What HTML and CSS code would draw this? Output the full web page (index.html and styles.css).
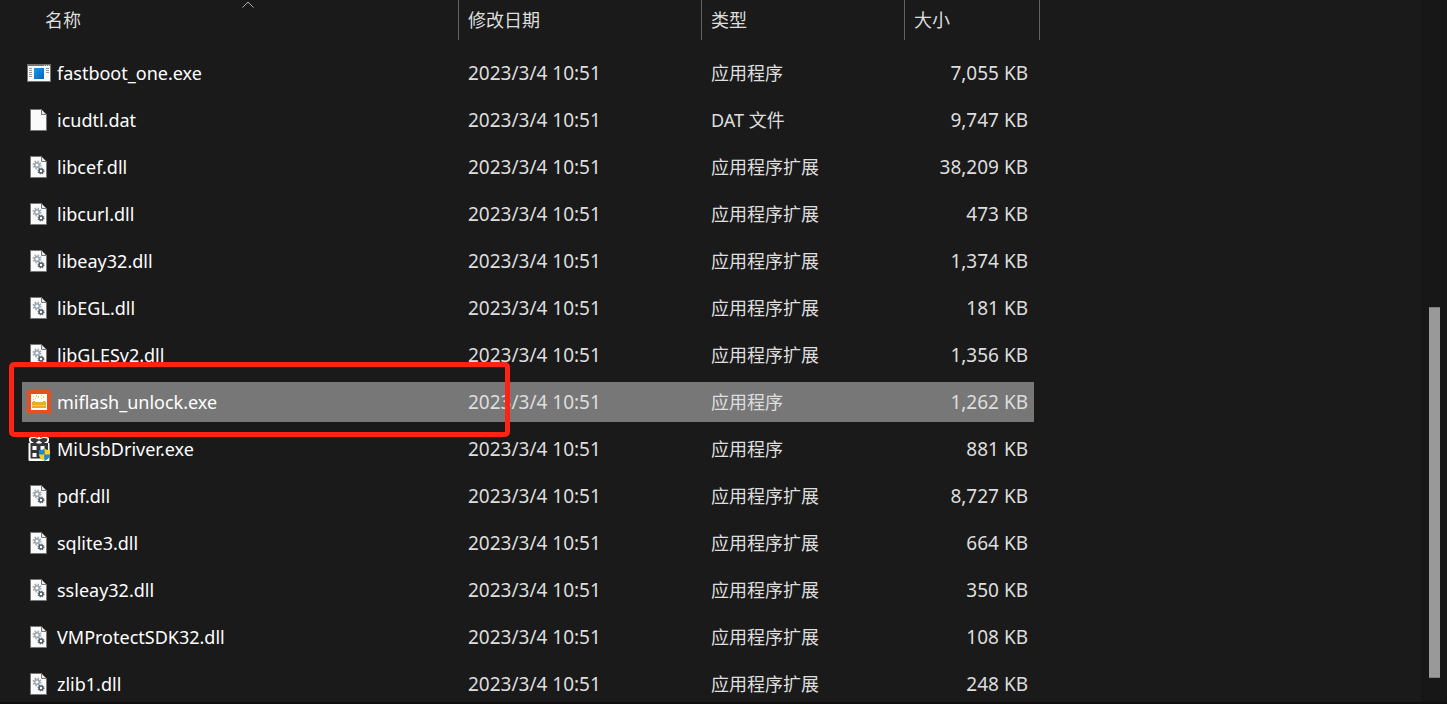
FILE: index.html
```
<!DOCTYPE html>
<html lang="zh-CN">
<head>
<meta charset="utf-8">
<title>文件列表</title>
<link rel="stylesheet" href="styles.css">
</head>
<body>
<svg class="symbols" aria-hidden="true">
  <defs>
    <linearGradient id="blue" x1="0" y1="0" x2="1" y2="1"><stop offset="0" stop-color="#1d9be6"/><stop offset="1" stop-color="#0364ba"/></linearGradient>
    <symbol id="app" viewBox="0 0 24 24">
      <path fill="#737373" d="M0 3h24v18H0z"/><path fill="#fafafa" d="M1 5h22v15H1z"/>
      <path fill="#d0d0d0" d="M17 4h1v1h-1zM19 4h1v1h-1zM21 4h1v1h-1z"/>
      <path fill="url(#blue)" d="M7 7h10v11H7z"/>
      <path stroke="#969696" d="M2 7.500h3M2 9.500h3M2 11.500h3M2 13.500h3M2 15.500h3M19 7.500h3M19 9.500h3M19 11.500h3"/>
    </symbol>
    <symbol id="page" viewBox="0 0 24 24">
      <path fill="#fafafa" stroke="#777" d="M3.500 1.500h11l5 5v16h-16z"/>
      <path fill="#1a1a1a" d="M15 0h6v6z"/><path fill="#e8e8e8" stroke="#777" d="M14.500 1.500v5h5z"/>
    </symbol>
    <symbol id="dll" viewBox="0 0 24 24">
      <use href="#page"/>
      <circle cx="10" cy="10" r="3.500" fill="none" stroke="#a3adb6" stroke-width="2" stroke-dasharray="1.500 1.250"/>
      <circle cx="10" cy="10" r="2.300" fill="none" stroke="#98a3ad" stroke-width="1.500"/>
      <circle cx="14" cy="16" r="2.700" fill="none" stroke="#5d666d" stroke-width="1.600" stroke-dasharray="1.200 .92"/>
      <circle cx="14" cy="16" r="1.900" fill="none" stroke="#535c62" stroke-width="1.400"/>
    </symbol>
    <symbol id="unlock" viewBox="0 0 24 24">
      <path fill="#e6501e" d="M0 0h24v24H0z"/><path fill="#fff" d="M4 4h16v16H4z"/>
      <path fill="#e9ab28" d="M5 12h1v-1h2v1h8v-1h2v1h1v6H5z"/>
      <path fill="#efc368" d="M6 6h1v1H6zM9 5h1v2H9zM11 6h1v2h-1zM8 8h1v1H8zM14 5h1v1h-1zM16 6h1v2h-1zM14 8h1v1h-1zM6 9h1v1H6z"/>
      <path stroke="#f3c65d" d="M5 15.500h14"/>
    </symbol>
    <symbol id="usb" viewBox="0 0 24 24">
      <path fill="#fff" d="M2 1l2-1h4l4 1 4-1h4l2 1v3l-1 2h1.500v17q0 1-1 1h-19q-1 0-1-1V6H3L2 4z"/>
      <path fill="#333436" d="M3.500 1.500 8 1l4 1.500L16 1l4.500.500L20 4l-3 2h4v15.500H3.500V6H7L4 4z"/>
      <path fill="#fff" d="M11 0h2v1.500h-2zM9 5.500l3-2 3 2-1 1h-4zM5.500 9h4v4h-4zM13.500 9h4v4h-4zM5.500 16h4v4h-4z"/>
      <path fill="#168bd2" d="M17.500 11.500V18h-5.500v-5q3 .5 5.500-1.500z"/><path fill="#ffcf24" d="M17.500 11.500q2.500 2 5.500 1.500v5h-5.500z"/>
      <path fill="#ffcf24" d="M12 17.500h5.500V24q-5-2-5.500-6.500z"/><path fill="#168bd2" d="M17.500 17.500H23q-.5 4.500-5.500 6.500z"/>
    </symbol>
  </defs>
</svg>
<main class="explorer">
  <div class="content">
    <table class="files">
      <colgroup><col class="col-name"><col class="col-date"><col class="col-type"><col class="col-size"><col class="col-end"></colgroup>
      <thead>
        <tr>
          <th class="head-name" scope="col" aria-sort="ascending"><button class="head" type="button">名称<svg class="sort" viewBox="0 0 12 7" aria-hidden="true"><path d="M.5 6.500 6 1l5.500 5.500"/></svg></button></th>
          <th scope="col"><button class="head" type="button">修改日期</button></th>
          <th scope="col"><button class="head" type="button">类型</button></th>
          <th scope="col" colspan="2"><button class="head" type="button">大小</button></th>
        </tr>
      </thead>
      <tbody>
        <tr><td><div class="name"><svg class="icon"><use href="#app"/></svg>fastboot_one.exe</div></td><td class="num">2023/3/4 10:51</td><td>应用程序</td><td class="size">7,055 KB</td></tr>
        <tr><td><div class="name"><svg class="icon"><use href="#page"/></svg>icudtl.dat</div></td><td class="num">2023/3/4 10:51</td><td>DAT 文件</td><td class="size">9,747 KB</td></tr>
        <tr><td><div class="name"><svg class="icon"><use href="#dll"/></svg>libcef.dll</div></td><td class="num">2023/3/4 10:51</td><td>应用程序扩展</td><td class="size">38,209 KB</td></tr>
        <tr><td><div class="name"><svg class="icon"><use href="#dll"/></svg>libcurl.dll</div></td><td class="num">2023/3/4 10:51</td><td>应用程序扩展</td><td class="size">473 KB</td></tr>
        <tr><td><div class="name"><svg class="icon"><use href="#dll"/></svg>libeay32.dll</div></td><td class="num">2023/3/4 10:51</td><td>应用程序扩展</td><td class="size">1,374 KB</td></tr>
        <tr><td><div class="name"><svg class="icon"><use href="#dll"/></svg>libEGL.dll</div></td><td class="num">2023/3/4 10:51</td><td>应用程序扩展</td><td class="size">181 KB</td></tr>
        <tr><td><div class="name"><svg class="icon"><use href="#dll"/></svg>libGLESv2.dll</div></td><td class="num">2023/3/4 10:51</td><td>应用程序扩展</td><td class="size">1,356 KB</td></tr>
        <tr class="selected"><td class="marked"><div class="name"><svg class="icon"><use href="#unlock"/></svg>miflash_unlock.exe</div><span class="marker"></span></td><td class="num">2023/3/4 10:51</td><td>应用程序</td><td class="size">1,262 KB</td></tr>
        <tr><td><div class="name"><svg class="icon"><use href="#usb"/></svg>MiUsbDriver.exe</div></td><td class="num">2023/3/4 10:51</td><td>应用程序</td><td class="size">881 KB</td></tr>
        <tr><td><div class="name"><svg class="icon"><use href="#dll"/></svg>pdf.dll</div></td><td class="num">2023/3/4 10:51</td><td>应用程序扩展</td><td class="size">8,727 KB</td></tr>
        <tr><td><div class="name"><svg class="icon"><use href="#dll"/></svg>sqlite3.dll</div></td><td class="num">2023/3/4 10:51</td><td>应用程序扩展</td><td class="size">664 KB</td></tr>
        <tr><td><div class="name"><svg class="icon"><use href="#dll"/></svg>ssleay32.dll</div></td><td class="num">2023/3/4 10:51</td><td>应用程序扩展</td><td class="size">350 KB</td></tr>
        <tr><td><div class="name"><svg class="icon"><use href="#dll"/></svg>VMProtectSDK32.dll</div></td><td class="num">2023/3/4 10:51</td><td>应用程序扩展</td><td class="size">108 KB</td></tr>
        <tr><td><div class="name"><svg class="icon"><use href="#dll"/></svg>zlib1.dll</div></td><td class="num">2023/3/4 10:51</td><td>应用程序扩展</td><td class="size">248 KB</td></tr>
      </tbody>
    </table>
  </div>
  <div class="scrollbar" aria-hidden="true"><div class="before"></div><div class="thumb"></div><div class="after"></div></div>
</main>
</body>
</html>
```
FILE: styles.css
```
* { box-sizing: border-box; }
body {
  margin: 0;
  background: #1a1a1a;
  color: #dedede;
  font: 18px/26px "Noto Sans", "Noto Sans CJK SC", sans-serif;
}
.symbols { position: absolute; width: 0; height: 0; }
.explorer {
  display: flex;
  height: 100vh;
  overflow: hidden;
  border-bottom: 2px solid #140c11;
}
.content { flex: 1; min-width: 0; overflow: hidden; padding-left: 22px; }
.files { table-layout: fixed; width: 1018px; border-collapse: separate; border-spacing: 0; }
.col-name { width: 437px; }
.col-date { width: 243px; }
.col-type { width: 203px; }
.col-size { width: 129px; }
.col-end { width: 6px; }

th { height: 50px; padding: 0; vertical-align: top; font-weight: 400; }
.head-name { padding-left: 14px; }
.head {
  position: relative;
  display: block;
  width: 100%;
  height: 40px;
  padding: 0 9px;
  border: 0;
  border-right: 1px solid #636363;
  background: none;
  color: inherit;
  font: inherit;
  text-align: left;
}
.sort {
  position: absolute;
  top: 1px;
  left: calc(50% - 5px);
  width: 12px;
  height: 7px;
  fill: none;
  stroke: #acacac;
}

td {
  height: 47px;
  padding: 0 0 0 9px;
  border: solid transparent;
  border-width: 3px 0 4px;
  background-clip: padding-box;
  white-space: nowrap;
}
td:first-child { padding-left: 5px; }
.name { display: flex; align-items: center; gap: 6px; color: #fff; }
.icon { flex: none; width: 24px; height: 24px; }
.num, .size { font-size: 19px; }
.size { padding: 0 6px 0 0; text-align: right; }
.selected td { background-color: #777; }
.marked { position: relative; }
.marker {
  position: absolute;
  z-index: 1;
  top: -20px;
  left: -13px;
  width: 501px;
  height: 75px;
  border: 5px solid #ff2314;
  border-radius: 5px;
}

.scrollbar { display: flex; flex: none; flex-direction: column; width: 26px; padding: 0 7px 0 8px; background: #171717; }
.before { flex: 308; }
.thumb { flex: 370; border: solid #7d7d7d; border-width: 1px 0; background: #999; }
.after { flex: 24; }
```
